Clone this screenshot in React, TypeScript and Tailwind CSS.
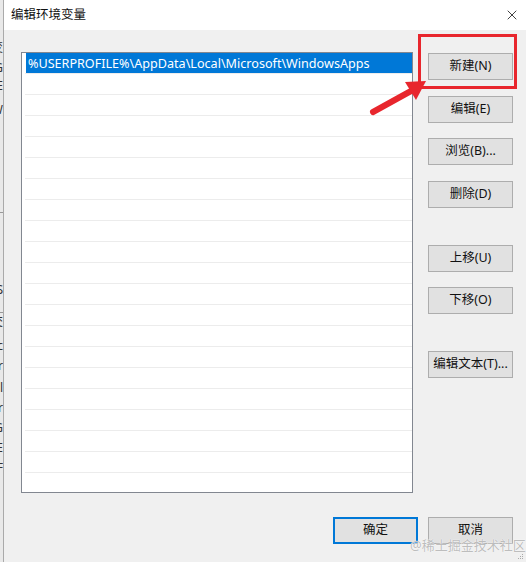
import { X } from "lucide-react";

const font = {
  fontFamily: '"Noto Sans", "Noto Sans CJK SC", sans-serif',
};

const sideButtons = [
  { label: "新建(N)", mt: "mt-[1px]" },
  { label: "编辑(E)", mt: "mt-[16px]" },
  { label: "浏览(B)...", mt: "mt-[15px]" },
  { label: "删除(D)", mt: "mt-[16px]" },
  { label: "上移(U)", mt: "mt-[37px]" },
  { label: "下移(O)", mt: "mt-[15px]" },
  { label: "编辑文本(T)...", mt: "mt-[37px]" },
];

// bits of the window behind, peeking out on the left edge
const behind = [
  { top: 42, ch: "变" },
  { top: 62, ch: "G" },
  { top: 80, ch: "E" },
  { top: 104, ch: "W" },
  { top: 284, ch: "S" },
  { top: 316, ch: "交" },
  { top: 340, ch: "c" },
  { top: 360, ch: "r" },
  { top: 382, ch: "l" },
  { top: 402, ch: "r" },
  { top: 422, ch: "G" },
  { top: 442, ch: "E" },
  { top: 462, ch: "F" },
];

function WinButton({
  label,
  className = "",
  primary = false,
}: {
  label: string;
  className?: string;
  primary?: boolean;
}) {
  return (
    <button
      type="button"
      className={`flex h-[27px] w-[85px] items-center justify-center bg-[#e1e1e1] text-[12.5px] text-[#111] ${
        primary ? "border-2 border-[#0078d7]" : "border border-[#adadad]"
      } ${className}`}
    >
      {label}
    </button>
  );
}

export default function App() {
  const rows = Array.from({ length: 21 });

  return (
    <div
      style={font}
      className="relative h-[562px] w-[526px] overflow-hidden bg-[#f0f0f0]"
    >
      {/* strip of the window behind */}
      <div className="absolute left-0 top-0 h-full w-[3px] overflow-hidden bg-[#e9e9e9]">
        {behind.map((b) => (
          <span
            key={b.top}
            className="absolute right-0 text-[12px] leading-none text-[#333]"
            style={{ top: b.top }}
          >
            {b.ch}
          </span>
        ))}
        <div className="absolute left-0 top-[212px] h-px w-full bg-[#999]" />
        <div className="absolute left-0 top-[312px] h-px w-full bg-[#999]" />
      </div>

      <div className="ml-[3px] flex h-full flex-col border-l border-[#aaa]">
        {/* title bar */}
        <div className="flex h-[30px] items-center justify-between bg-white pl-[7px] pr-[6px]">
          <span className="text-[12.5px] text-[#111]">编辑环境变量</span>
          <X className="h-[16px] w-[16px] text-[#111]" strokeWidth={1.2} />
        </div>

        {/* body */}
        <div className="flex flex-1 flex-col pl-[17px] pt-[22px]">
          <div className="flex">
            <div className="h-[441px] w-[392px] overflow-hidden border border-[#828790] bg-white">
              {rows.map((_, i) => (
                <div key={i} className="h-[21px] pl-[3px]">
                  <div className="relative h-full border-b border-[#ececec]">
                    {i === 0 && (
                      <div className="absolute inset-y-0 left-[1px] right-0 flex items-center bg-[#0078d7] pl-[2px] pt-[2px] text-[12.6px] text-white">
                        %USERPROFILE%\AppData\Local\Microsoft\WindowsApps
                      </div>
                    )}
                  </div>
                </div>
              ))}
            </div>

            <div className="ml-[15px] flex flex-col">
              {sideButtons.map((b) => (
                <WinButton key={b.label} label={b.label} className={b.mt} />
              ))}
            </div>
          </div>

          <div className="mt-[24px] flex justify-end gap-[10px] pr-[13px]">
            <WinButton label="确定" primary />
            <WinButton label="取消" />
          </div>
        </div>
      </div>

      {/* red annotation */}
      <svg
        className="pointer-events-none absolute left-0 top-0"
        width={526}
        height={562}
      >
        <rect
          x={419.5}
          y={35.5}
          width={96}
          height={52}
          fill="none"
          stroke="#e8262d"
          strokeWidth={3}
        />
        <line
          x1={373}
          y1={112}
          x2={411}
          y2={91}
          stroke="#e8262d"
          strokeWidth={6}
          strokeLinecap="round"
        />
        <polygon points="426,81 405,82 416,100" fill="#e8262d" />
      </svg>

      {/* watermark */}
      <div className="pointer-events-none absolute left-[410px] top-[536px] text-[13px] text-[#bdbdbd] [text-shadow:0_0_1px_#fff,0_0_1px_#fff]">
        @稀土掘金技术社区
      </div>

      {/* resize grip */}
      <div className="absolute bottom-[3px] right-[3px] grid grid-cols-3 gap-[1px]">
        {[0, 0, 1, 0, 1, 1, 1, 1, 1].map((v, i) => (
          <div
            key={i}
            className={`h-[1px] w-[1px] ${v ? "bg-[#aaa]" : "bg-transparent"}`}
          />
        ))}
      </div>
    </div>
  );
}
